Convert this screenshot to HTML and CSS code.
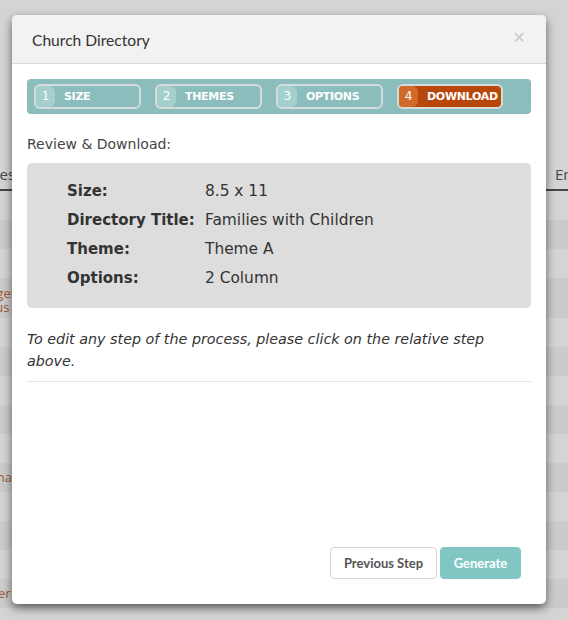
FILE: index.html
```html
<!DOCTYPE html>
<html>
<head>
<meta charset="utf-8">
<link rel="stylesheet" href="styles.css">
</head>
<body>
<div class="page">
  <div class="thead">
    <span class="th th-left">Names</span>
    <span class="th th-right">Email</span>
  </div>
  <div class="rows">
    <div class="row"></div>
    <div class="row alt"></div>
    <div class="row"></div>
    <div class="row alt tall"><span class="link two">Budget<br>Angus</span></div>
    <div class="row"></div>
    <div class="row alt"></div>
    <div class="row"></div>
    <div class="row alt"></div>
    <div class="row"></div>
    <div class="row alt"><span class="link">Hannai</span></div>
    <div class="row"></div>
    <div class="row alt"></div>
    <div class="row"></div>
    <div class="row alt"><span class="link">Esther</span></div>
  </div>
</div>
<div class="backdrop"></div>
<div class="modal">
  <div class="modal-header">
    <h4 class="modal-title">Church Directory</h4>
    <span class="close">&times;</span>
  </div>
  <div class="modal-body">
    <div class="steps">
      <div class="step"><span class="num">1</span><span class="label">SIZE</span></div>
      <div class="step"><span class="num">2</span><span class="label">THEMES</span></div>
      <div class="step"><span class="num">3</span><span class="label">OPTIONS</span></div>
      <div class="step active"><span class="num">4</span><span class="label">DOWNLOAD</span></div>
    </div>
    <p class="review">Review &amp; Download:</p>
    <div class="summary">
      <div class="k">Size:</div><div class="v">8.5 x 11</div>
      <div class="k">Directory Title:</div><div class="v">Families with Children</div>
      <div class="k">Theme:</div><div class="v">Theme A</div>
      <div class="k">Options:</div><div class="v">2 Column</div>
    </div>
    <p class="note">To edit any step of the process, please click on the relative step above.</p>
    <hr class="rule">
  </div>
  <div class="modal-footer">
    <button class="btn btn-default">Previous Step</button>
    <button class="btn btn-primary">Generate</button>
  </div>
</div>
</body>
</html>
```
FILE: styles.css
```css
html, body {
  margin: 0;
  padding: 0;
  width: 568px;
  height: 620px;
  overflow: hidden;
  background: #fff;
  font-family: "DejaVu Sans", sans-serif;
}

.page {
  width: 568px;
  padding-top: 160px;
  overflow: hidden;
  font-family: "Open Sans", sans-serif;
}

.thead {
  display: flex;
  height: 29px;
  border-bottom: 2px solid #555;
  font-size: 15px;
  color: #555;
  line-height: 29px;
}
.th-left { margin-left: -34px; }
.th-right { margin-left: auto; width: 13px; overflow: hidden; white-space: nowrap; }

.row {
  height: 29px;
  background: #fff;
  font-size: 13px;
  color: #c06a38;
}
.row.alt { background: #f5f5f5; }
.row.tall { height: 40px; }

.link {
  display: block;
  margin-left: -28px;
  line-height: 29px;
}
.link.two {
  line-height: 14px;
  padding-top: 8px;
}

.backdrop {
  position: absolute;
  inset: 0;
  background: rgba(0, 0, 0, 0.17);
}

.modal {
  position: absolute;
  left: 12px;
  top: 15px;
  width: 534px;
  height: 589px;
  background: #fff;
  border-radius: 5px;
  box-shadow: 0 4px 10px rgba(0, 0, 0, 0.55);
  display: flex;
  flex-direction: column;
  overflow: hidden;
}

.modal-header {
  height: 48px;
  background: #f2f2f2;
  border-bottom: 1px solid #d8d8d8;
  display: flex;
  align-items: center;
  justify-content: space-between;
  padding: 0 21px 0 20px;
}
.modal-title {
  margin: 0;
  font-family: Lato, sans-serif;
  font-weight: normal;
  font-size: 15.6px;
  color: #333;
  padding-top: 2px;
}
.close {
  font-family: "Liberation Sans", sans-serif;
  font-size: 20px;
  color: #c8c8c8;
  margin-top: -4px;
}

.modal-body {
  flex: 1;
  padding: 15px 15px 0 15px;
}

.steps {
  height: 35px;
  background: #8abdbc;
  border-radius: 4px;
  display: flex;
  align-items: center;
  padding-left: 7px;
  gap: 14px;
}
.step {
  width: 103px;
  height: 21px;
  border: 2px solid #d5dcdb;
  border-radius: 6px;
  display: flex;
  align-items: stretch;
  overflow: hidden;
  color: #fff;
  font-family: "DejaVu Sans", sans-serif;
  font-weight: bold;
  font-size: 11px;
}
.step .num {
  width: 19px;
  background: #a4cfcd;
  border-radius: 0 6px 6px 0;
  text-align: center;
  line-height: 21px;
  font-weight: normal;
  font-size: 12px;
}
.step .label {
  padding-left: 9px;
  line-height: 21px;
  letter-spacing: -0.3px;
}
.step.active {
  background: #b8470c;
  width: 102px;
}
.step.active .num { background: #d06a2b; }

.review {
  margin: 21px 0 0 0;
  font-size: 14px;
  color: #444;
  line-height: 18px;
}

.summary {
  margin-top: 10px;
  background: #dddddd;
  border-radius: 5px;
  height: 145px;
  box-sizing: border-box;
  padding: 14px 0 0 40px;
  display: grid;
  grid-template-columns: 138px 1fr;
  grid-auto-rows: 29px;
  align-content: start;
  font-size: 15.4px;
  color: #333;
  line-height: 29px;
}
.summary .k { font-weight: bold; font-size: 15px; }

.note {
  margin: 20px 0 0 0;
  font-style: italic;
  font-size: 14.3px;
  line-height: 22px;
  color: #333;
  padding-right: 20px;
}

.rule {
  margin: 9px 0 0 0;
  border: 0;
  border-top: 1px solid #e5e5e5;
}

.modal-footer {
  display: flex;
  justify-content: flex-end;
  gap: 3px;
  padding: 0 25px 25px 0;
}
.btn {
  height: 32px;
  border-radius: 4px;
  font-family: Lato, sans-serif;
  font-weight: bold;
  font-size: 13px;
  padding: 0 12px;
  cursor: pointer;
}
.btn-default {
  background: #fff;
  border: 1px solid #d6d6d6;
  color: #555;
  width: 107px;
}
.btn-primary {
  background: #82c6c3;
  border: 1px solid #82c6c3;
  color: #fff;
  width: 81px;
}
```
